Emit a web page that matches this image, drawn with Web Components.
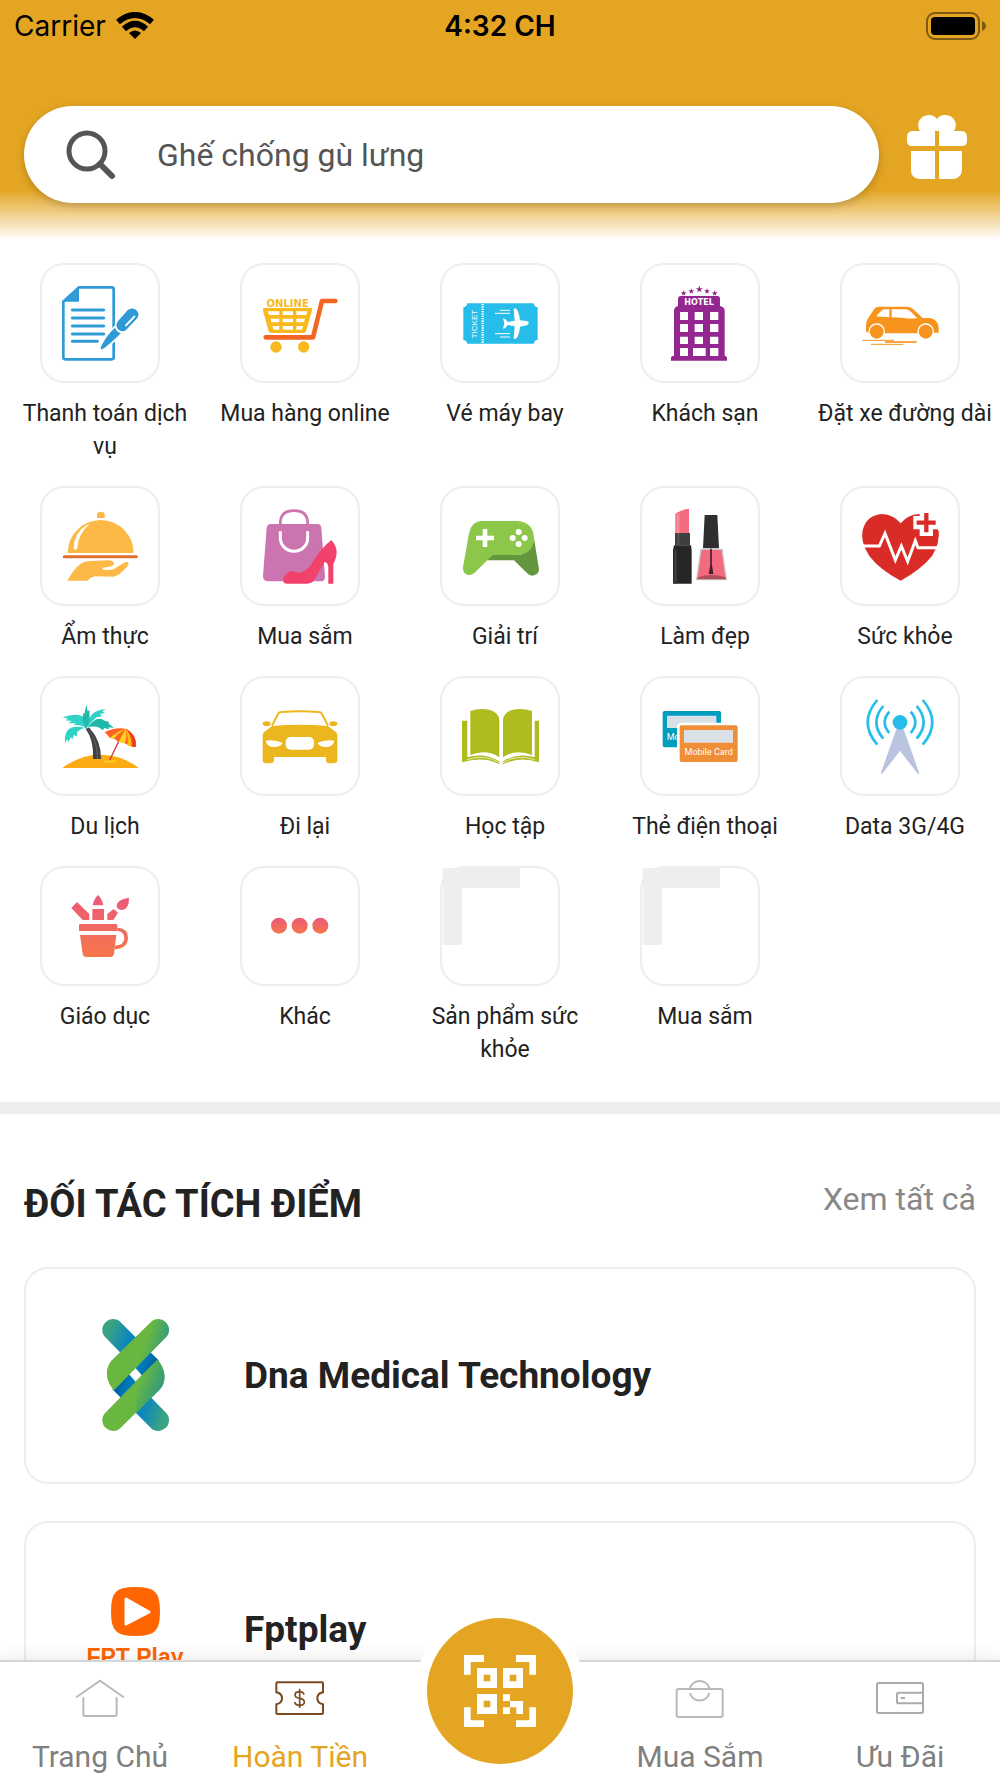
<!DOCTYPE html>
<html lang="vi">
<head>
<meta charset="utf-8">
<meta name="viewport" content="width=device-width, initial-scale=1">
<title>Hoàn Tiền</title>
<style>
  body { margin: 0; background: #fff; color: #222; font-family: Roboto, "Noto Sans", sans-serif; }
</style>
</head>
<body>
<cashback-app></cashback-app>

<script>
const define = (name, html) => {
  const template = document.createElement('template');
  template.innerHTML = html;
  customElements.define(name, class extends HTMLElement {
    constructor() {
      super();
      this.attachShadow({ mode: 'open' }).append(template.content.cloneNode(true));
    }
    connectedCallback() {
      const art = this.shadowRoot.querySelector('[data-art]');
      if (art) art.innerHTML = ART[this.getAttribute('icon')] || '';
    }
  });
};

const svg = (box, body) => `<svg viewBox="${box}" aria-hidden="true">${body}</svg>`;
const star = (x, y, s) => `<path transform="translate(${x} ${y}) scale(${s})" d="M0-10 2.6-3.2 9.5-3.1 4 1.3 5.9 8.1 0 4.2-5.9 8.1-4 1.3-9.5-3.1-2.6-3.2z"/>`;
const warm = `<defs><linearGradient id="warm" gradientUnits="userSpaceOnUse" x1="0" y1="135" x2="0" y2="321"><stop stop-color="#e9597a"/><stop offset="1" stop-color="#f7784b"/></linearGradient></defs>`;
const placeholder = svg('1326 54 348 348', '<path fill="#eee" d="M1328 54H1560V114H1386V285H1328z"/>');

const ART = {
  bill: svg('126 45 348 348', `
    <path d="M237 112H336Q341 112 341 118V322Q341 328 335 328H196Q190 328 190 322V155z" fill="none" stroke="#2e9bd6" stroke-width="8"/>
    <path d="M237 108L187 155H237z" fill="#2e9bd6"/>
    <path d="M217 180H311M217 204H311M217 228H311M217 252H311M217 274H292" stroke="#2e9bd6" stroke-width="9" stroke-linecap="round"/>
    <g fill="#2e9bd6" stroke="#fff" stroke-width="5">
      <path d="M347 228Q350 246 368 247Q348 270 312 298Q298 306 300 290Q318 252 347 228z"/>
      <path d="M381 179Q398 166 412 180Q424 194 412 208L380 242Q366 252 352 240Q342 226 351 213z"/></g>
    <path d="M378 226L403 200" stroke="#fff" stroke-width="6" stroke-linecap="round"/>`),
  cart: svg('726 45 348 348', `
    <text x="863" y="170" text-anchor="middle" font-family="DejaVu Sans" font-weight="700" font-size="30" fill="#f9b91c">ONLINE</text>
    <path d="M792 174H934Q938 176 936 182L918 244Q916 249 912 249H814Q808 249 806 244L789 182Q788 176 792 174z" fill="#f9b91c"/>
    <path fill="#fff" d="M803 184H838V195H807zM848 184H879V195H848zM889 184H922L919 195H889zM811 206H838V217H814zM848 206H879V217H848zM889 206H915L912 217H889zM817 228H838V239H821zM848 228H879V239H848zM889 228H909L906 239H889z"/>
    <path d="M797 262H939L966 153H1006" fill="none" stroke="#f26522" stroke-width="14" stroke-linecap="round" stroke-linejoin="round"/>
    <g fill="#f9b91c"><circle cx="828" cy="291" r="17"/><circle cx="911" cy="291" r="17"/></g>`),
  ticket: svg('1326 45 348 348', `
    <path d="M1402 160H1601Q1603 171 1613 172V270Q1603 271 1601 281H1402Q1400 271 1390 270V172Q1400 171 1402 160z" fill="#27bdea"/>
    <path d="M1448 162V281" stroke="#fff" stroke-width="7" stroke-dasharray="4 3"/>
    <text transform="translate(1431 265) rotate(-90)" font-family="Liberation Sans" font-size="24" fill="#fff">TICKET</text>
    <path d="M1500 181H1530M1485 190H1530M1485 251H1530M1500 261H1530" stroke="#fff" stroke-width="3"/>
    <path d="M1586 219Q1586 212 1574 212L1560 211Q1556 180 1547 175L1541 176L1544 212L1523 216Q1518 206 1509 205L1513 220L1509 236Q1518 235 1523 225L1544 229L1541 266H1548Q1557 258 1560 230L1574 227Q1586 226 1586 219z" fill="#fff"/>`),
  hotel: svg('426 45 348 348', `
    <g fill="#93278f">${star(551, 130, .9)}${star(574, 124, .9)}${star(598, 118, 1.1)}${star(621, 124, .9)}${star(644, 130, .9)}
    <path d="M534 144Q536 138 542 138H654Q660 139 660 146V168Q674 172 674 182V318H677Q682 320 681 332H513Q511 320 518 318H522V182Q522 172 534 168z"/></g>
    <text x="597" y="166" text-anchor="middle" font-family="DejaVu Sans" font-weight="700" font-size="24" fill="#fff">HOTEL</text>
    <path fill="#fff" d="M540 186h24v24h-24zM584 186h25v24h-25zM630 186h25v24h-25zM540 222h24v24h-24zM584 222h25v24h-25zM630 222h25v24h-25zM540 260h24v22h-24zM584 260h25v22h-25zM630 260h25v22h-25zM540 294h24v24h-24zM579 294h38v24h-38zM630 294h25v24h-25z"/>`),
  suv: svg('1026 45 348 348', `
    <path d="M1098 244V232Q1098 212 1105 204L1122 178Q1126 170 1136 170H1222Q1232 170 1240 178L1268 204H1288Q1306 206 1314 222Q1318 236 1316 248H1302V250H1106z" fill="#f7941d"/>
    <path fill="#fff" d="M1129 199L1143 183Q1147 178 1154 178H1168V202zM1175 178H1216Q1225 178 1231 184L1252 205Q1216 206 1206 203L1175 202z"/>
    <g fill="#f7941d" stroke="#fff" stroke-width="4"><circle cx="1130" cy="245" r="23"/><circle cx="1277" cy="245" r="23"/></g>
    <path d="M1087 271H1182M1113 283H1210" stroke="#f7941d" stroke-width="3"/><path d="M1155 276H1250" stroke="#f7941d" stroke-width="5"/>`),
  food: svg('126 54 348 348', `
    <g fill="#fdb945"><path d="M291 144V134Q291 125 302 125Q314 125 314 134V144z"/>
    <path d="M203 249A99 99 0 0 1 401 249z"/>
    <path d="M202 332Q232 278 262 274L325 271Q340 271 342 280Q342 289 328 290L308 293Q306 299 314 300Q338 302 350 292L372 278Q386 273 386 281Q383 290 372 300Q354 318 340 320L284 319Q272 322 262 332z"/></g>
    <path d="M222 237Q222 186 266 163Q234 192 230 237z" stroke="#fff" stroke-width="2" fill="#fff"/>
    <path d="M193 260H409" stroke="#e0702b" stroke-width="9" stroke-linecap="round"/>`),
  bag: svg('726 54 348 348', `
    <path d="M812 162H952Q963 162 964 174L975 320Q975 334 962 334H804Q788 333 789 318L800 174Q801 163 812 162z" fill="#cb74b0"/>
    <path d="M841 165V158Q842 122 882 122Q922 122 923 158V165" fill="none" stroke="#cb74b0" stroke-width="8"/>
    <path d="M841 184V204A41 40 0 0 0 923 204V184" fill="none" stroke="#fff" stroke-width="9"/>
    <path d="M994 210Q1010 228 1010 246Q1010 262 1000 282V341H985V292Q984 278 974 276Q962 296 944 328Q938 341 920 341H860Q846 340 850 324Q860 304 880 303Q890 310 900 308Q925 302 938 276Q960 238 994 210z" fill="#f2416b"/>`),
  game: svg('1326 54 348 348', `
    <path d="M1455 255H1560Q1600 240 1602 205L1617 298Q1616 316 1596 317Q1588 316 1580 308L1542 271H1455z" fill="#64963e"/>
    <path d="M1444 153H1552Q1600 156 1602 205Q1600 250 1556 255H1478L1424 308Q1414 316 1404 315Q1388 312 1389 292L1407 190Q1414 154 1444 153z" fill="#8cc74a"/>
    <path d="M1428 204H1482M1455 177V231" stroke="#fff" stroke-width="14"/>
    <g fill="#fff"><circle cx="1556" cy="186" r="9"/><circle cx="1538" cy="204" r="9"/><circle cx="1574" cy="204" r="9"/><circle cx="1556" cy="222" r="9"/></g>`),
  beauty: svg('426 54 348 348', `
    <path d="M526 132Q540 120 567 116V189H526z" fill="#f46a7f"/><path d="M530 136L538 130V189H530z" fill="#f88f9f"/>
    <path d="M525 189H570V226H525z" fill="#3f3f41"/><path d="M532 189H538V226H532z" fill="#555"/>
    <path d="M522 226H573L575 240V341H519V240z" fill="#272526"/><path d="M522 240H530V341H522z" fill="#3d3b3c"/>
    <path d="M614 135H652L657 235H609z" fill="#302e2f"/>
    <path d="M603 238H666L679 329H590z" fill="#f46a7f" stroke="#c9c9c9" stroke-width="4"/>
    <path d="M594 322Q634 308 676 322L678 328H592z" fill="#b24e5c"/>
    <path d="M633 236V296" stroke="#4a1c2a" stroke-width="5"/><path d="M631 286H636L640 312H626z" fill="#4a1c2a"/>`),
  heart: svg('1026 54 348 348', `
    <path d="M1202 332Q1140 300 1108 258Q1080 215 1088 180Q1100 135 1146 132Q1182 134 1202 160Q1222 134 1258 132Q1302 138 1314 180Q1322 216 1296 258Q1262 300 1202 332z" fill="#da2c27"/>
    <path d="M1090 228H1138L1155 190L1186 270L1204 228L1223 274L1246 212L1254 233H1312" fill="none" stroke="#fff" stroke-width="9"/>
    <path d="M1240 158H1319M1279 122V198" stroke="#fff" stroke-width="40"/>
    <path d="M1246 182H1256V200H1246zM1303 182H1316V200H1303z" fill="#da2c27"/>
    <path d="M1250 158H1307M1279 129V187" stroke="#da2c27" stroke-width="13"/>`),
  beach: svg('126 54 348 348', `
    <path d="M187 324Q240 284 302 284Q370 286 416 324z" fill="#fdab14"/>
    <ellipse cx="331" cy="304" rx="20" ry="5" fill="#ffc61a"/>
    <path d="M257 206L268 203Q304 242 303 297H279Q282 240 257 206z" fill="#414145"/><path d="M264 206Q292 240 293 297" fill="none" stroke="#626267" stroke-width="3"/>
    <g fill="#2fd3c6"><path d="M260 206Q262 176 250 170Q228 158 188 172L204 176L197 181L215 183L205 190L228 189L220 196Q244 192 260 206z"/>
    <path d="M262 202Q262 152 318 147L307 154L315 158L300 162L306 169L290 172Q276 182 262 202z"/>
    <path d="M258 204Q190 186 195 248L202 238L206 246L212 231L217 239L222 224L230 230L232 216Q244 204 258 204z"/></g>
    <g fill="#20b8aa"><path d="M259 206Q244 186 250 158L253 162L259 134L263 154L268 150Q272 184 259 206z"/>
    <path d="M262 204Q290 164 314 182L328 186L325 190L342 204L326 202L327 208L312 204L309 211L298 203Q280 196 262 204z"/></g>
    <path d="M356 244L329 301" stroke="#d3352b" stroke-width="4"/>
    <path d="M314 217Q344 200 378 206Q412 224 408 260Q398 262 386 256Q370 246 352 244Q344 234 330 234Q320 222 314 217z" fill="#ff6224"/>
    <path d="M378 206Q350 214 330 234L342 236Q350 222 378 206zM378 206Q368 220 356 246L374 250Q382 230 378 206z" fill="#ffd31c"/>
    <path d="M378 206Q386 232 382 256L394 260Q396 230 378 206z" fill="#ffbe13"/><path d="M378 206Q402 230 396 260L408 260Q410 224 378 206z" fill="#f23a12"/>`),
  car: svg('726 54 348 348', `
    <path d="M816 197L834 162Q836 157 844 156Q900 152 956 156Q964 157 966 162L984 197" fill="none" stroke="#ecb61f" stroke-width="6"/>
    <g fill="#ecb61f"><ellipse cx="800" cy="191" rx="12" ry="7"/><ellipse cx="1000" cy="191" rx="12" ry="7"/>
    <path d="M816 198Q900 191 984 198L1010 218Q1012 222 1012 228V302Q1010 310 1000 310H986Q978 309 978 300V291H822V300Q822 309 812 310H800Q790 310 788 302V228Q788 222 790 218z"/></g>
    <rect x="857" y="231" width="85" height="38" rx="15" fill="#fff"/>
    <path d="M797 242Q824 238 848 249Q840 262 820 261Q800 259 797 242zM1003 242Q976 238 952 249Q960 262 980 261Q1000 259 1003 242z" fill="#fff"/>`),
  book: svg('1326 54 348 348', `
    <g fill="#b0bb20"><path d="M1411 153Q1440 142 1470 150Q1496 158 1498 180V292Q1460 266 1411 285z"/>
    <path d="M1596 153Q1566 142 1536 150Q1510 158 1509 180V292Q1546 266 1596 285z"/>
    <path d="M1386 182H1402V292Q1452 276 1498 304V313Q1450 288 1386 307z"/><path d="M1617 182H1604V292Q1554 276 1509 304V313Q1558 288 1617 307z"/></g>
    <path d="M1402 299Q1452 281 1498 308M1604 299Q1554 281 1509 308" fill="none" stroke="#fff" stroke-width="2"/>`),
  card: svg('426 54 348 348', `
    <rect x="488" y="153" width="175" height="109" rx="6" fill="#019ec0"/><path d="M501 167H649V204H501z" fill="#d9e1e6"/>
    <text x="500" y="240" font-family="Roboto" font-size="27" fill="#fff">Mo</text>
    <rect x="535" y="192" width="182" height="118" rx="9" fill="#f08d37" stroke="#fff" stroke-width="8"/><path d="M552 210H699V248H552z" fill="#d9e1e6"/>
    <text x="626" y="285" text-anchor="middle" font-family="Roboto" font-size="27" fill="#fff">Mobile Card</text>`),
  tower: svg('1026 54 348 348', `
    <path d="M1190 205H1210L1258 340Q1256 344 1252 340L1200 272L1148 340Q1144 344 1143 338z" fill="#b9c4de"/>
    <circle cx="1200" cy="187" r="22" fill="#27bdea"/>
    <path d="M1232 155Q1260 187 1232 219M1250 138Q1292 187 1250 236M1268 120Q1326 187 1268 254M1168 155Q1140 187 1168 219M1150 138Q1108 187 1150 236M1132 120Q1074 187 1132 254" fill="none" stroke="#27bdea" stroke-width="8"/>`),
  study: svg('126 54 348 348', `${warm}
    <g fill="url(#warm)"><path d="M240 255H349L342 312Q340 321 332 321H258Q250 321 248 312zM237 226Q237 222 242 222H347Q352 222 352 226V243H237z"/>
    <path d="M352 233Q384 234 384 265Q382 296 344 298V287Q372 287 373 265Q372 244 352 243z"/>
    <path d="M214 174L231 156L268 192V210H248zM278 166Q282 146 294 135Q306 146 310 166zM277 177H312V210H277zM322 192L341 177L354 188L340 210H322zM387 143Q350 148 350 168Q352 180 367 180Q388 176 387 143z"/></g>`),
  more: svg('726 54 348 348', `<defs><linearGradient id="dot" x2="0" y2="1"><stop stop-color="#e9597a"/><stop offset="1" stop-color="#f7784b"/></linearGradient></defs>
    <g fill="url(#dot)"><circle cx="837" cy="227" r="24"/><circle cx="899" cy="227" r="24"/><circle cx="961" cy="227" r="24"/></g>`),
  empty: placeholder,

  dna: `<svg width="90" height="134" viewBox="0 0 270 402" aria-hidden="true"><defs>
    <linearGradient id="blue" gradientUnits="userSpaceOnUse" x1="45" y1="90" x2="200" y2="150"><stop stop-color="#3ba381"/><stop offset=".4" stop-color="#0a86bf"/><stop offset=".75" stop-color="#0080c4"/><stop offset="1" stop-color="#005fa0"/></linearGradient>
    <linearGradient id="upper" gradientUnits="userSpaceOnUse" x1="150" y1="60" x2="240" y2="90"><stop offset=".3" stop-color="#69b741"/><stop offset="1" stop-color="#2f9a80"/></linearGradient>
    <linearGradient id="lower" gradientUnits="userSpaceOnUse" x1="130" y1="180" x2="225" y2="220"><stop offset=".3" stop-color="#69b741"/><stop offset="1" stop-color="#2f9a80"/></linearGradient></defs>
    <path d="M92 40L207 155L158 202L137 178L46 85A32 32 0 0 1 92 40z" fill="url(#blue)"/>
    <path transform="rotate(180 137 198)" d="M92 40L207 155L158 202L137 178L46 85A32 32 0 0 1 92 40z" fill="url(#blue)"/>
    <path d="M182 40L64 155Q46 176 52 208Q58 230 72 244L228 85A32 32 0 0 0 182 40z" fill="url(#upper)"/>
    <path transform="rotate(180 137 198)" d="M182 40L64 155Q46 176 52 208Q58 230 72 244L228 85A32 32 0 0 0 182 40z" fill="#69b741"/>
    <path d="M202 152Q216 166 222 188Q228 220 210 241L137 314V217z" fill="url(#lower)"/></svg>`,
  fpt: `<svg width="100" height="86" viewBox="0 0 100 86" aria-hidden="true">
    <path d="M50 0Q66 0 70 5Q75 9 75 25Q75 40 70 44Q66 49 50 49Q35 49 31 44Q26 40 26 25Q26 9 31 5Q35 0 50 0z" fill="#ff6500"/>
    <path d="M41 12L64 25L41 37z" fill="#fff" stroke="#fff" stroke-width="3" stroke-linejoin="round"/>
    <text x="50" y="78" text-anchor="middle" font-family="Liberation Sans" font-weight="700" font-size="23" fill="#ff6500">FPT Play</text></svg>`,

  home: svg('216 528 168 132', '<path d="M230 591L300 542L370 591M250 594V643Q250 648 255 648H345Q350 648 350 643V594" fill="none" stroke="#b9b9b9" stroke-width="6" stroke-linecap="round"/>'),
  cash: svg('816 528 168 132', `<path d="M832 547H966Q969 547 969 550V577Q952 580 952 595Q952 610 969 613V639Q969 642 966 642H832Q829 642 829 639V613Q846 610 846 595Q846 580 829 577V550Q829 547 832 547z" fill="none" stroke="#7a4a22" stroke-width="6"/>
    <path d="M912 584Q910 575 899 575Q885 575 885 585Q885 593 899 595Q913 597 913 606Q913 616 899 616Q886 616 884 606M899 566V624" fill="none" stroke="#7a4a22" stroke-width="5"/>`),
  shop: svg('516 528 168 132', '<path d="M535 567H663Q668 567 668 572V646Q668 651 663 651H535Q530 651 530 646V572Q530 567 535 567zM570 565A30 30 0 0 1 628 565M570 579A30 30 0 0 0 628 579" fill="none" stroke="#b9b9b9" stroke-width="6"/>'),
  wallet: svg('1116 528 168 132', '<path d="M1136 549H1264Q1269 549 1269 554V634Q1269 639 1264 639H1136Q1131 639 1131 634V554Q1131 549 1136 549zM1269 578H1196Q1191 578 1191 583V605Q1191 610 1196 610H1269M1202 594H1215" fill="none" stroke="#aaa" stroke-width="6"/>')
};

define('status-bar', `
<style>
  :host { display: grid; grid-template-columns: 1fr auto 1fr; align-items: center; height: 51px; padding: 0 14px; color: #000; font: 400 28px/34px Inter, sans-serif; }
  .left { display: flex; align-items: center; gap: 10px; }
  .time { font-weight: 600; }
  .battery { justify-self: end; }
  svg { display: block; }
</style>
<div class="left"><span>Carrier</span>
  <svg width="38" height="28" viewBox="0 0 38 28" aria-hidden="true"><g fill="none" stroke="#000" stroke-width="6"><path d="M2 10Q19-4 36 10"/><path d="M8 17Q19 7 30 17"/></g><path d="M19 27L13 21Q19 16 25 21z"/></svg></div>
<span class="time">4:32 CH</span>
<svg class="battery" width="60" height="28" viewBox="0 0 60 28" aria-hidden="true"><rect x="1" y="1" width="52" height="26" rx="8" fill="none" stroke="#000" stroke-opacity=".45" stroke-width="2"/><rect x="5" y="5" width="44" height="18" rx="4"/><path d="M56 9Q60 11 60 14Q60 17 56 19z" fill-opacity=".45"/></svg>`);

define('search-header', `
<style>
  :host { display: block; padding-bottom: 37px; background: linear-gradient(#e4a523 190px, #fff 240px); }
  form { display: flex; align-items: center; gap: 28px; margin: 55px 33px 0 24px; }
  label { flex: 1; min-width: 0; display: flex; align-items: center; gap: 41px; height: 97px; box-sizing: border-box; padding: 0 42px; border-radius: 49px; background: #fff; box-shadow: 0 3px 8px rgba(0,0,0,.2); }
  label svg { flex: none; }
  input { flex: 1; min-width: 0; border: 0; outline: 0; padding: 0; background: none; color: #555; font: 400 32px/44px Roboto, sans-serif; }
  input::placeholder { color: #555; opacity: 1; }
  button { border: 0; padding: 0; margin-bottom: 16px; background: none; }
  svg { display: block; }
</style>
<status-bar></status-bar>
<form>
  <label><svg width="50" height="50" viewBox="0 0 50 50" role="img" aria-label="Tìm kiếm"><circle cx="21" cy="21" r="18" fill="none" stroke="#555" stroke-width="5"/><path d="M34 34L46 46" stroke="#555" stroke-width="6" stroke-linecap="round"/></svg>
  <input type="text" placeholder="Ghế chống gù lưng"></label>
  <button type="button" aria-label="Quà tặng"><svg width="60" height="64" viewBox="0 0 60 64" fill="#fff"><path d="M28 16V31H5Q0 31 0 26V22Q0 16 6 16H13Q10 11 12 6Q15 0 22 0Q27 0 30 4Q33 0 38 0Q45 0 48 6Q50 11 47 16H54Q60 16 60 22V26Q60 31 55 31H32V16zM4 36H28V64H12Q4 63 4 55zM32 36H55V55Q54 63 47 64H32z"/></svg></button>
</form>`);

define('service-tile', `
<style>
  :host { display: block; }
  a { display: block; color: #222; text-decoration: none; }
  .tile { width: 116px; height: 116px; margin: 0 auto; border: 2px solid #eee; border-radius: 24px; }
  svg { display: block; width: 116px; height: 116px; }
  .label { display: block; margin-top: 14px; padding: 0 5px 23px 15px; text-align: center; font-size: 23px; line-height: 33px; }
</style>
<a href="#"><div class="tile" data-art></div><span class="label"><slot></slot></span></a>`);

define('service-grid', `
<style>
  :host { display: grid; grid-template-columns: repeat(5, 1fr); padding: 23px 0 13px; border-bottom: 12px solid #eee; }
</style><slot></slot>`);

define('partner-section', `
<style>
  :host { display: block; padding: 60px 24px 37px; }
  header { display: flex; justify-content: space-between; align-items: center; margin-bottom: 33px; }
  h2 { margin: 0; font-size: 38px; line-height: 60px; font-weight: 700; }
  a { color: #888; text-decoration: none; font-size: 32px; line-height: 50px; padding-bottom: 10px; }
  .list { display: flex; flex-direction: column; gap: 37px; }
</style>
<header><h2><slot name="title"></slot></h2><a href="#">Xem tất cả</a></header>
<div class="list"><slot></slot></div>`);

define('partner-card', `
<style>
  :host { display: flex; align-items: center; min-height: 213px; border: 2px solid #eee; border-radius: 24px; background: #fff; }
  .logo { flex: none; width: 218px; display: flex; justify-content: center; }
  h3 { margin: 0; font-size: 37px; line-height: 50px; font-weight: 700; }
</style>
<div class="logo" data-art></div><h3><slot></slot></h3>`);

define('nav-item', `
<style>
  :host { display: block; }
  a { display: flex; flex-direction: column; align-items: center; gap: 17px; color: #808080; text-decoration: none; font-size: 30px; line-height: 40px; white-space: nowrap; }
  :host([active]) a { color: #e4a523; }
  svg { display: block; width: 56px; height: 44px; }
</style>
<a href="#"><span data-art></span><span><slot></slot></span></a>`);

define('tab-bar', `
<style>
  :host { position: relative; flex: none; display: grid; grid-template-columns: repeat(5, 1fr); padding: 14px 0 1px; border-top: 2px solid #d6d6d6; background: #fff; box-shadow: 0 -4px 16px rgba(0,0,0,.08); }
  button { position: absolute; left: 50%; top: -44px; transform: translateX(-50%); display: grid; place-items: center; width: 146px; height: 146px; padding: 0; border: 0; border-radius: 50%; background: #e4a523; box-shadow: 0 0 0 12px #fff; }
</style>
<nav-item icon="home">Trang Chủ</nav-item>
<nav-item icon="cash" active>Hoàn Tiền</nav-item>
<span></span>
<nav-item icon="shop">Mua Sắm</nav-item>
<nav-item icon="wallet">Ưu Đãi</nav-item>
<button type="button" aria-label="Quét mã QR"><svg width="72" height="72" viewBox="1392 465 216 216" fill="#fff"><path d="M1392 465H1452V486H1412V524H1392zM1608 465H1548V486H1588V524H1608zM1392 681H1452V661H1412V622H1392zM1608 681H1548V661H1588V622H1608z"/><path fill-rule="evenodd" d="M1431 504h60v60h-60zm20 20v20h20v-20zM1509 504h60v60h-60zm20 20v20h20v-20zM1431 582h60v60h-60zm20 20v20h20v-20z"/><path d="M1509 583h21v20h39v39h-20v-20h-19v20h-21v-20h21v-19h-21z"/></svg></button>`);

define('cashback-app', `
<style>
  :host { display: flex; flex-direction: column; height: 100vh; }
  main { flex: 1; min-height: 0; overflow-y: auto; scrollbar-width: none; }
</style>
<main>
  <search-header></search-header>
  <service-grid>
    <service-tile icon="bill">Thanh toán dịch vụ</service-tile>
    <service-tile icon="cart">Mua hàng online</service-tile>
    <service-tile icon="ticket">Vé máy bay</service-tile>
    <service-tile icon="hotel">Khách sạn</service-tile>
    <service-tile icon="suv">Đặt xe đường dài</service-tile>
    <service-tile icon="food">Ẩm thực</service-tile>
    <service-tile icon="bag">Mua sắm</service-tile>
    <service-tile icon="game">Giải trí</service-tile>
    <service-tile icon="beauty">Làm đẹp</service-tile>
    <service-tile icon="heart">Sức khỏe</service-tile>
    <service-tile icon="beach">Du lịch</service-tile>
    <service-tile icon="car">Đi lại</service-tile>
    <service-tile icon="book">Học tập</service-tile>
    <service-tile icon="card">Thẻ điện thoại</service-tile>
    <service-tile icon="tower">Data 3G/4G</service-tile>
    <service-tile icon="study">Giáo dục</service-tile>
    <service-tile icon="more">Khác</service-tile>
    <service-tile icon="empty">Sản phẩm sức khỏe</service-tile>
    <service-tile icon="empty">Mua sắm</service-tile>
  </service-grid>
  <partner-section>
    <span slot="title">ĐỐI TÁC TÍCH ĐIỂM</span>
    <partner-card icon="dna">Dna Medical Technology</partner-card>
    <partner-card icon="fpt">Fptplay</partner-card>
  </partner-section>
</main>
<tab-bar></tab-bar>`);
</script>
</body>
</html>
